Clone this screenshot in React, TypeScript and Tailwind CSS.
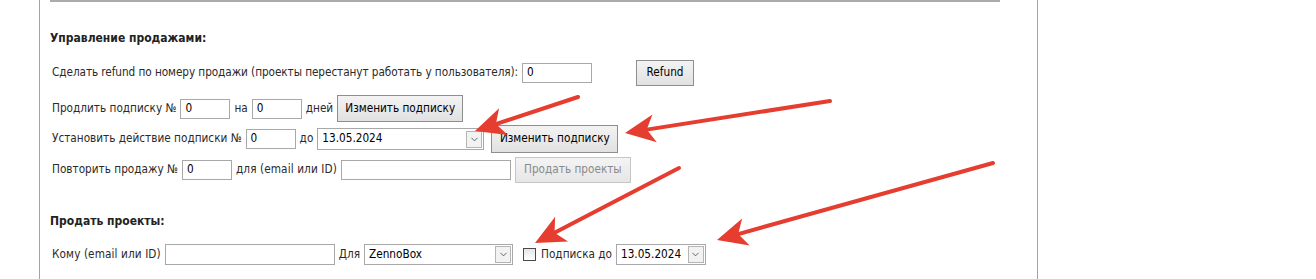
import { ChevronDown } from 'lucide-react';

type Arrow = { x1: number; y1: number; x2: number; y2: number };

const arrows: Arrow[] = [
  { x1: 578, y1: 97, x2: 475, y2: 131 },
  { x1: 830, y1: 101, x2: 625, y2: 133 },
  { x1: 679, y1: 168, x2: 535, y2: 243 },
  { x1: 993, y1: 163, x2: 717, y2: 240 },
];

function ArrowShape({ x1, y1, x2, y2 }: Arrow) {
  const len = Math.hypot(x2 - x1, y2 - y1);
  const dx = (x2 - x1) / len;
  const dy = (y2 - y1) / len;
  const nx = -dy;
  const ny = dx;
  const L = 30;
  const W = 14;
  const bx = x2 - L * dx;
  const by = y2 - L * dy;
  const notchX = x2 - (L - 8) * dx;
  const notchY = y2 - (L - 8) * dy;
  const pts = [
    [x2, y2],
    [bx + W * nx, by + W * ny],
    [notchX, notchY],
    [bx - W * nx, by - W * ny],
  ]
    .map((p) => p.join(','))
    .join(' ');

  return (
    <g>
      <line x1={x1} y1={y1} x2={notchX} y2={notchY} stroke="#e53d2f" strokeWidth={4} strokeLinecap="round" />
      <polygon points={pts} fill="#e53d2f" />
    </g>
  );
}

function Field({ className, value = '' }: { className: string; value?: string }) {
  return (
    <div className={`flex h-[20px] items-center border border-[#a8a8a8] bg-white px-[4px] text-black ${className}`}>
      {value}
    </div>
  );
}

function Select({ className, value }: { className: string; value: string }) {
  return (
    <div className={`flex items-center border border-[#a8a8a8] bg-white pl-[4px] text-black ${className}`}>
      <span className="whitespace-nowrap">{value}</span>
      <span className="ml-auto mr-[1px] flex h-[17px] w-[16px] items-center justify-center border border-[#b5b5b5] bg-[#f2f2f2]">
        <ChevronDown size={11} strokeWidth={1.8} className="text-[#4a4a4a]" />
      </span>
    </div>
  );
}

function Btn({ children, className = '', disabled = false }: { children: React.ReactNode; className?: string; disabled?: boolean }) {
  return (
    <button
      type="button"
      className={
        disabled
          ? `whitespace-nowrap border border-[#c6c6c6] bg-gradient-to-b from-[#f4f4f4] to-[#e6e6e6] text-center text-[#8a8a8a] ${className}`
          : `whitespace-nowrap border border-[#8e8e8e] bg-gradient-to-b from-[#f3f3f3] to-[#e1e1e1] text-center text-black ${className}`
      }
    >
      {children}
    </button>
  );
}

export default function App() {
  return (
    <div className="relative h-[279px] w-[1316px] overflow-hidden bg-white font-['DejaVu_Sans_Condensed','DejaVu_Sans',sans-serif] text-[11.7px] text-[#2a2a2a]">
      <div className="ml-[39px] h-full w-[999px] border-x border-[#a3a3a3]">
        <div className="ml-[10px] h-[2px] w-[950px] border-x-2 border-b-2 border-[#ababab]" />

        <div className="mt-[26px] flex h-[20px] items-center pl-[10px] text-[12px] font-bold text-[#222]">Управление продажами:</div>

        <div className="mt-[12px] flex h-[26px] items-center gap-[4px] pl-[12px]">
          <span className="whitespace-nowrap tracking-[-0.07px]">
            Сделать refund по номеру продажи (проекты перестанут работать у пользователя):
          </span>
          <Field className="w-[70px]" value="0" />
          <Btn className="ml-[40px] h-[26px] w-[58px]">Refund</Btn>
        </div>

        <div className="mt-[9px] flex h-[27px] items-center gap-[4px] pl-[12px]">
          <span className="whitespace-nowrap">Продлить подписку №</span>
          <Field className="w-[50px]" value="0" />
          <span>на</span>
          <Field className="w-[50px]" value="0" />
          <span>дней</span>
          <Btn className="h-[27px] w-[126px]">Изменить подписку</Btn>
        </div>

        <div className="mt-[3px] flex h-[28px] items-center gap-[4px] pl-[12px]">
          <span className="whitespace-nowrap">Установить действие подписки №</span>
          <Field className="w-[50px]" value="0" />
          <span>до</span>
          <Select className="h-[22px] w-[167px]" value="13.05.2024" />
          <Btn className="ml-[3px] h-[28px] w-[127px]">Изменить подписку</Btn>
        </div>

        <div className="mt-[4px] flex h-[26px] items-center gap-[4px] pl-[12px]">
          <span className="whitespace-nowrap">Повторить продажу №</span>
          <Field className="w-[50px]" value="0" />
          <span className="whitespace-nowrap tracking-[0.1px]">для (email или ID)</span>
          <Field className="w-[170px]" />
          <Btn disabled className="h-[26px] w-[116px]">
            Продать проекты
          </Btn>
        </div>

        <div className="mt-[28px] flex h-[20px] items-center pl-[10px] text-[12px] font-bold text-[#222]">Продать проекты:</div>

        <div className="mt-[13px] flex h-[21px] items-center gap-[4px] pl-[12px]">
          <span className="whitespace-nowrap tracking-[0.1px]">Кому (email или ID)</span>
          <Field className="h-[21px] w-[170px]" />
          <span>Для</span>
          <Select className="h-[21px] w-[149px]" value="ZennoBox" />
          <span className="ml-[6px] h-[13px] w-[13px] border border-[#4a4a4a] bg-gradient-to-b from-[#e6e6e6] to-white" />
          <span className="ml-[1px] whitespace-nowrap">Подписка до</span>
          <Select className="h-[21px] w-[90px]" value="13.05.2024" />
        </div>
      </div>

      <svg className="pointer-events-none absolute inset-0" width={1316} height={279}>
        {arrows.map((a, i) => (
          <ArrowShape key={i} {...a} />
        ))}
      </svg>
    </div>
  );
}
